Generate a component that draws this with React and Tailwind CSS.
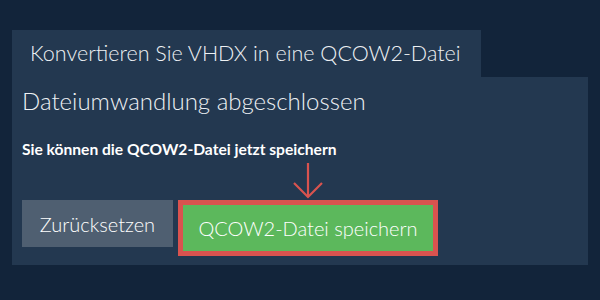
export default function App() {
  return (
    <div
      className="w-[600px] h-[300px] bg-[#12243a] pt-[30px] px-[12px] text-[#eef1f4]"
      style={{ fontFamily: "Lato, 'Open Sans', sans-serif" }}
    >
      <div className="w-[469px] h-[47px] bg-[#233850] pl-[18px] flex items-center text-[21.5px] font-light leading-none whitespace-nowrap">
        Konvertieren Sie VHDX in eine QCOW2-Datei
      </div>
      <div className="h-[188px] bg-[#233850] px-[10px] pt-[8px] flex flex-col">
        <h2 className="text-[24px] leading-[32px] font-light">Dateiumwandlung abgeschlossen</h2>
        <p className="mt-[22px] text-[15.6px] leading-[20px] font-bold text-white">
          Sie können die QCOW2-Datei jetzt speichern
        </p>
        <div className="flex items-start gap-[5px] mt-[4px]">
          <div className="mt-[37px]">
            <button className="w-[151px] h-[47px] bg-[#4f5f71] text-[20px] font-light text-white">
              Zurücksetzen
            </button>
          </div>
          <div className="flex flex-col items-center">
            <svg width="30" height="37" viewBox="0 0 30 37" fill="none" stroke="#d9534f" strokeWidth="2.2">
              <path d="M15 0 V34" />
              <path d="M1 20 L15 34 L29 20" />
            </svg>
            <button className="w-[260px] h-[56px] bg-[#5cb85c] border-[5px] border-[#d9534f] text-[20px] font-light text-white">
              QCOW2-Datei speichern
            </button>
          </div>
        </div>
      </div>
    </div>
  );
}
